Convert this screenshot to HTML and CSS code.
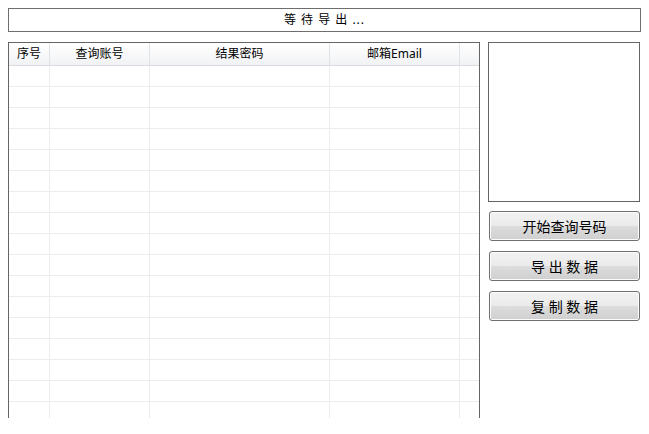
FILE: index.html
```html
<!DOCTYPE html>
<html lang="zh-CN">
<head>
  <meta charset="UTF-8" />
  <meta name="viewport" content="width=device-width, initial-scale=1.0"/>
  <title>查询号码</title>
  <link rel="stylesheet" href="styles.css">
</head>
<body>
  <div class="status">等 待 导 出 ...</div>

  <div class="main">
    <div class="grid">
      <div class="grid-row grid-head">
        <div>序号</div><div>查询账号</div><div>结果密码</div><div>邮箱Email</div><div></div>
      </div>
      <div class="grid-row"><div></div><div></div><div></div><div></div><div></div></div>
      <div class="grid-row"><div></div><div></div><div></div><div></div><div></div></div>
      <div class="grid-row"><div></div><div></div><div></div><div></div><div></div></div>
      <div class="grid-row"><div></div><div></div><div></div><div></div><div></div></div>
      <div class="grid-row"><div></div><div></div><div></div><div></div><div></div></div>
      <div class="grid-row"><div></div><div></div><div></div><div></div><div></div></div>
      <div class="grid-row"><div></div><div></div><div></div><div></div><div></div></div>
      <div class="grid-row"><div></div><div></div><div></div><div></div><div></div></div>
      <div class="grid-row"><div></div><div></div><div></div><div></div><div></div></div>
      <div class="grid-row"><div></div><div></div><div></div><div></div><div></div></div>
      <div class="grid-row"><div></div><div></div><div></div><div></div><div></div></div>
      <div class="grid-row"><div></div><div></div><div></div><div></div><div></div></div>
      <div class="grid-row"><div></div><div></div><div></div><div></div><div></div></div>
      <div class="grid-row"><div></div><div></div><div></div><div></div><div></div></div>
      <div class="grid-row"><div></div><div></div><div></div><div></div><div></div></div>
      <div class="grid-row"><div></div><div></div><div></div><div></div><div></div></div>
      <div class="grid-row"><div></div><div></div><div></div><div></div><div></div></div>
    </div>

    <div class="side">
      <div class="log"></div>
      <button class="btn">开始查询号码</button>
      <button class="btn">导 出 数 据</button>
      <button class="btn">复 制 数 据</button>
    </div>
  </div>
</body>
</html>
```

FILE: styles.css
```css
body {
  font-family: "Noto Sans", "Noto Sans CJK SC", sans-serif;
  font-size: 12px;
  color: #000;
  margin: 0;
  padding: 8px;
  background-color: #fff;
}
.status {
  height: 22px;
  line-height: 22px;
  border: 1px solid #6e6e6e;
  text-align: center;
  font-size: 12px;
  letter-spacing: 1px;
}
.main {
  display: flex;
  gap: 8px;
  margin-top: 10px;
}
.grid {
  width: 470px;
  height: 375px;
  border: 1px solid #646464;
  border-bottom: none;
  overflow: hidden;
}
.grid-row {
  display: grid;
  grid-template-columns: 41px 100px 180px 130px 1fr;
  height: 21px;
}
.grid-row div {
  box-sizing: border-box;
  border-right: 1px solid #ececec;
  border-bottom: 1px solid #ececec;
}
.grid-row div:last-child {
  border-right: none;
}
.grid-head {
  height: 23px;
}
.grid-head div {
  line-height: 22px;
  text-align: center;
  background: linear-gradient(#ffffff, #f1f2f4);
  border-right-color: #dfe2e6;
  border-bottom-color: #d9dce0;
  white-space: nowrap;
}
.side {
  width: 152px;
  display: flex;
  flex-direction: column;
  align-items: flex-end;
}
.log {
  width: 150px;
  height: 158px;
  border: 1px solid #646464;
  margin-bottom: 9px;
}
.btn {
  width: 151px;
  height: 30px;
  margin-bottom: 10px;
  padding: 0;
  font-family: "Noto Sans", "Noto Sans CJK SC", sans-serif;
  font-size: 14px;
  color: #000;
  border: 1px solid #707070;
  border-radius: 3px;
  box-shadow: inset 0 0 0 1px #fcfcfc;
  background: linear-gradient(#f2f2f2 0%, #ebebeb 50%, #dddddd 51%, #cfcfcf 100%);
}
```
